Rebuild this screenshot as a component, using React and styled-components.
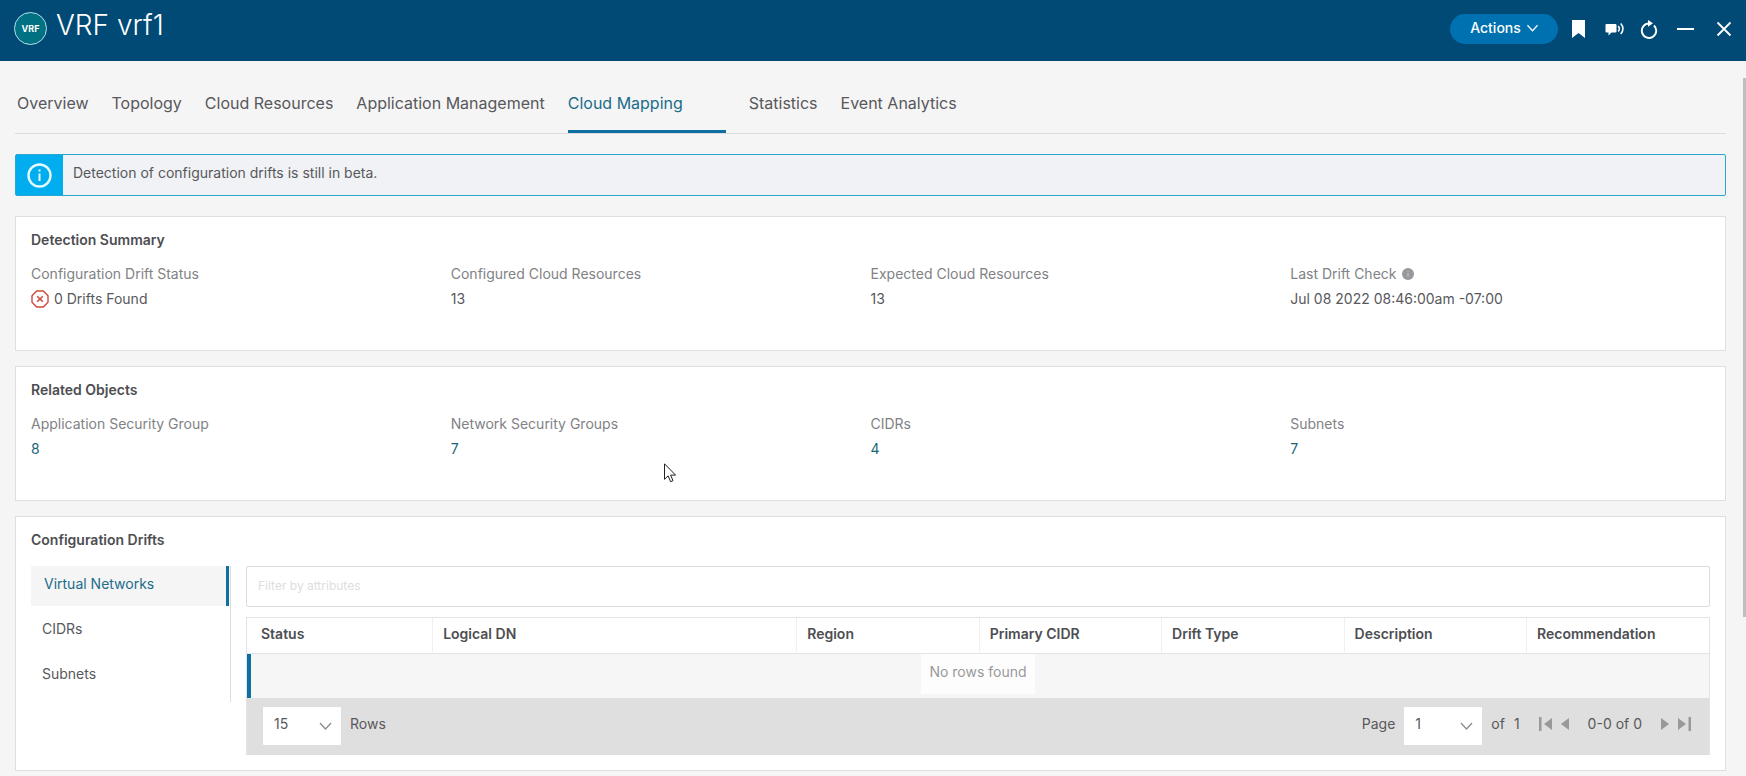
import React, { useState } from "react";
import styled, { createGlobalStyle } from "styled-components";

const GlobalStyle = createGlobalStyle`
  * {
    box-sizing: border-box;
  }

  body {
    margin: 0;
    background: #f5f5f6;
    color: #58585b;
    font-family: Inter, "Liberation Sans", sans-serif;
    font-size: 14px;
    line-height: 20px;
    overflow: hidden;
  }

  button, input, select {
    font: inherit;
    color: inherit;
  }
`;

const Page = styled.div`
  position: relative;
`;

const Header = styled.header`
  display: flex;
  align-items: flex-start;
  justify-content: space-between;
  height: 61px;
  padding: 0 14px;
  background: #004a75;
  color: #fff;
`;

const Heading = styled.div`
  display: flex;
  gap: 9px;
`;

const Badge = styled.span`
  display: flex;
  align-items: center;
  justify-content: center;
  width: 33px;
  height: 33px;
  margin-top: 12px;
  border: 1px solid #b5dfe8;
  border-radius: 50%;
  background: #007083;
  font-size: 9px;
  font-weight: 700;
`;

const PageTitle = styled.h1`
  margin: 8px 0 0;
  font-size: 28px;
  font-weight: 300;
  line-height: 34px;
`;

const Tools = styled.div`
  display: flex;
  align-items: center;
  gap: 14px;
  padding-top: 14px;
`;

const ActionsButton = styled.button`
  display: flex;
  align-items: center;
  justify-content: center;
  gap: 6px;
  width: 108px;
  height: 30px;
  padding: 0 0 2px;
  border: 0;
  border-radius: 15px;
  background: #0071b0;
  color: #fff;
  font-weight: 500;
`;

const IconButton = styled.button`
  display: flex;
  padding: 0;
  border: 0;
  background: none;
  margin-left: ${props => props.$gap || 0}px;
`;

const Content = styled.main`
  padding: 0 20px 4px 15px;
`;

const Tabs = styled.nav`
  display: flex;
  gap: 23px;
  height: 73px;
  padding: 0 2px;
  border-bottom: 1px solid #dcdcde;
`;

const Tab = styled.a`
  min-width: ${props => (props.$active ? "158px" : "auto")};
  padding-top: 32px;
  border-bottom: 3px solid ${props => (props.$active ? "#0f6fa3" : "transparent")};
  color: ${props => (props.$active ? "#1c6c89" : "#58585b")};
  font-size: 16px;
  text-decoration: none;
  white-space: nowrap;
`;

const Notice = styled.div`
  display: flex;
  height: 42px;
  margin: 20px 0;
  border: 1px solid #2ba7cf;
  border-radius: 2px;
  background: #f0f2f5;

  p {
    margin: 8px 10px;
  }
`;

const NoticeIcon = styled.div`
  display: flex;
  align-items: center;
  justify-content: center;
  width: 47px;
  background: #00adef;
`;

const Card = styled.section`
  margin-bottom: 15px;
  padding: 13px 15px ${props => props.$bottom || 41}px;
  border: 1px solid #dfdfe1;
  background: #fff;
`;

const CardTitle = styled.h2`
  margin: 0 0 ${props => props.$gap || 14}px;
  color: #4d4e51;
  font-size: 14px;
  font-weight: 600;
  line-height: 20px;
`;

const Facts = styled.dl`
  display: grid;
  grid-template-columns: repeat(4, 1fr);
  margin: 0;
`;

const Label = styled.dt`
  display: flex;
  align-items: center;
  gap: 5px;
  margin-bottom: 5px;
  color: #818285;
`;

const Value = styled.dd`
  display: flex;
  align-items: center;
  gap: 5px;
  height: 20px;
  margin: 0;
`;

const CountLink = styled.a`
  color: #1d6678;
  text-decoration: none;
`;

const Drifts = styled.div`
  display: grid;
  grid-template-columns: 200px 1fr;
  align-items: start;
  gap: 15px;
`;

const SideTabs = styled.nav`
  display: flex;
  flex-direction: column;
  gap: 5px;
  height: 136px;
  padding-right: 1px;
  border-right: 1px solid #dcdcde;
`;

const SideTab = styled.a`
  height: 40px;
  padding: 8px ${props => (props.$active ? 13 : 11)}px;
  border-right: 3px solid ${props => (props.$active ? "#0f6fa3" : "transparent")};
  background: ${props => (props.$active ? "#f5f5f6" : "none")};
  color: ${props => (props.$active ? "#1c6c89" : "#58585b")};
  text-decoration: none;
`;

const Filter = styled.input`
  display: block;
  width: 100%;
  height: 41px;
  margin-bottom: 10px;
  padding: 0 11px 2px;
  border: 1px solid #dcdcde;
  border-radius: 2px;
  background: #fff;
  font-size: 12px;

  &::placeholder {
    color: #dedede;
  }
`;

const Grid = styled.div`
  border: 1px solid #e3e3e5;
  border-bottom: 0;
`;

const Table = styled.table`
  width: 100%;
  border-collapse: collapse;
  table-layout: fixed;
`;

const HeadCell = styled.th`
  height: 35px;
  padding: 0 10px 2px;
  border-right: 1px solid #f0f0f1;
  color: #4d4e51;
  font-weight: 600;
  text-align: left;

  &:first-child {
    padding-left: 14px;
  }

  &:last-child {
    border-right: 0;
  }
`;

const EmptyCell = styled.td`
  height: 45px;
  padding: 0 0 4px;
  border-top: 1px solid #e3e3e5;
  background: #f6f6f6;
  box-shadow: inset 4px 0 #0f6fa3;
  color: #98999b;
  text-align: center;

  span {
    display: inline-block;
    padding: 8px 8px 12px;
    background: #fdfdfd;
  }
`;

const Footer = styled.div`
  display: flex;
  align-items: center;
  justify-content: space-between;
  height: 57px;
  padding: 0 18px 1px 16px;
  background: #dfdfdf;
`;

const FooterGroup = styled.div`
  display: flex;
  align-items: center;
  gap: ${props => props.$gap || 9}px;
`;

const FooterText = styled.span`
  padding-bottom: 4px;
`;

const PagerButton = styled(IconButton)`
  padding-bottom: 4px;
`;

const Picker = styled.div`
  position: relative;
  display: flex;

  svg {
    position: absolute;
    right: 9px;
    top: 15px;
    pointer-events: none;
  }
`;

const Select = styled.select`
  width: 78px;
  height: 38px;
  padding: 0 11px 4px;
  border: 0;
  border-radius: 1px;
  background: #fff;
  appearance: none;
`;

const ScrollThumb = styled.div`
  position: absolute;
  top: 78px;
  right: 0;
  width: 3px;
  height: 539px;
  background: #bfbfc0;
`;

const Pointer = styled.svg`
  position: absolute;
  top: 463px;
  left: 664px;
`;

const Chevron = ({ width = 13, color = "#8c8d8f" }) => (
  <svg width={width} height="8" viewBox="0 0 12 8" fill="none" stroke={color}>
    <path d="M.5 1L6 7l5.500-6" strokeWidth="1.300" />
  </svg>
);

const BookmarkIcon = () => (
  <svg width="13" height="18" viewBox="0 0 13 18" fill="#fff">
    <path d="M0 0h13v18l-6.500-5L0 18z" />
  </svg>
);

const SpeakIcon = () => (
  <svg width="20" height="16" viewBox="0 0 20 16" fill="none" stroke="#fff">
    <path
      d="M1.500 3h9a1 1 0 0 1 1 1v6.500a1 1 0 0 1-1 1H6.500L3.500 14.500v-3h-2a1 1 0 0 1-1-1V4a1 1 0 0 1 1-1z"
      fill="#fff"
      stroke="none"
    />
    <path d="M13.200 5c1.300 1.500 1.300 4 0 5.500" strokeWidth="1.500" />
    <path d="M15.700 2.500c3 3 3 7.500 0 10.500" strokeWidth="1.600" />
  </svg>
);

const RefreshIcon = () => (
  <svg width="18" height="19" viewBox="0 0 18 19" fill="none" stroke="#fff">
    <path d="M9 3.500A7.200 7.200 0 1 0 14 5.500" strokeWidth="1.900" />
    <path d="M8 0l5 3.300L8 6.800z" fill="#fff" stroke="none" />
  </svg>
);

const InfoIcon = () => (
  <svg width="25" height="25" viewBox="0 0 25 25" fill="none" stroke="#e4fbff">
    <circle cx="12.500" cy="12.500" r="11" strokeWidth="2.400" />
    <path d="M12.500 10.500V18M12.500 6.500v2" strokeWidth="2" />
  </svg>
);

const ErrorIcon = () => (
  <svg width="18" height="18" viewBox="0 0 18 18" fill="none" stroke="#cf4a3c">
    <path d="M5.700 1h6.600L17 5.700v6.600L12.300 17H5.700L1 12.300V5.700z" strokeWidth="1.400" />
    <path d="M6.200 6.200l5.600 5.600M11.800 6.200l-5.600 5.600" strokeWidth="1.600" />
  </svg>
);

const HintIcon = () => (
  <svg width="12" height="12" viewBox="0 0 12 12">
    <circle cx="6" cy="6" r="6" fill="#98999c" />
    <path d="M6 5.200v3.300M6 3.200v1" stroke="#cfcfd3" />
  </svg>
);

const PrevIcon = () => (
  <svg width="8" height="12" viewBox="0 0 8 12" fill="#98999b">
    <path d="M8 0v12L0 6z" />
  </svg>
);

const NextIcon = () => (
  <svg width="8" height="12" viewBox="0 0 8 12" fill="#98999b">
    <path d="M0 0v12l8-6z" />
  </svg>
);

const FirstIcon = () => (
  <svg width="13" height="14" viewBox="0 0 13 14" fill="#98999b">
    <path d="M0 0h2.500v14H0zM13 1v12L5 7z" />
  </svg>
);

const LastIcon = () => (
  <svg width="13" height="14" viewBox="0 0 13 14" fill="#98999b">
    <path d="M10.500 0H13v14h-2.500zM0 1v12l8-6z" />
  </svg>
);

const tabs = [
  "Overview",
  "Topology",
  "Cloud Resources",
  "Application Management",
  "Cloud Mapping",
  "Statistics",
  "Event Analytics"
];

const related = [
  { label: "Application Security Group", count: 8 },
  { label: "Network Security Groups", count: 7 },
  { label: "CIDRs", count: 4 },
  { label: "Subnets", count: 7 }
];

const sideTabs = ["Virtual Networks", "CIDRs", "Subnets"];

const columns = [
  { name: "Status", width: "12.7%" },
  { name: "Logical DN", width: "24.9%" },
  { name: "Region", width: "12.48%" },
  { name: "Primary CIDR", width: "12.48%" },
  { name: "Drift Type", width: "12.48%" },
  { name: "Description", width: "12.48%" },
  { name: "Recommendation", width: "12.48%" }
];

const App = () => {
  const [tab, setTab] = useState("Cloud Mapping");
  const [sideTab, setSideTab] = useState("Virtual Networks");

  return (
    <Page>
      <GlobalStyle />
      <Header>
        <Heading>
          <Badge>VRF</Badge>
          <PageTitle>VRF vrf1</PageTitle>
        </Heading>
        <Tools>
          <ActionsButton type="button">
            Actions
            <Chevron width={11} color="#fff" />
          </ActionsButton>
          <IconButton type="button" aria-label="Bookmark">
            <BookmarkIcon />
          </IconButton>
          <IconButton type="button" aria-label="Feedback" $gap={6}>
            <SpeakIcon />
          </IconButton>
          <IconButton type="button" aria-label="Refresh" $gap={1}>
            <RefreshIcon />
          </IconButton>
          <IconButton type="button" aria-label="Minimize" $gap={5}>
            <svg width="17" height="16" viewBox="0 0 17 16">
              <path d="M0 8h17" stroke="#fff" strokeWidth="2" />
            </svg>
          </IconButton>
          <IconButton type="button" aria-label="Close" $gap={8}>
            <svg width="16" height="16" viewBox="0 0 16 16">
              <path d="M1.500 1.500l13 13M14.500 1.500l-13 13" stroke="#fff" strokeWidth="1.800" />
            </svg>
          </IconButton>
        </Tools>
      </Header>

      <Content>
        <Tabs>
          {tabs.map(name => (
            <Tab key={name} href="#" $active={name === tab} onClick={() => setTab(name)}>
              {name}
            </Tab>
          ))}
        </Tabs>

        <Notice>
          <NoticeIcon>
            <InfoIcon />
          </NoticeIcon>
          <p>Detection of configuration drifts is still in beta.</p>
        </Notice>

        <Card>
          <CardTitle>Detection Summary</CardTitle>
          <Facts>
            <div>
              <Label>Configuration Drift Status</Label>
              <Value>
                <ErrorIcon />0 Drifts Found
              </Value>
            </div>
            <div>
              <Label>Configured Cloud Resources</Label>
              <Value>13</Value>
            </div>
            <div>
              <Label>Expected Cloud Resources</Label>
              <Value>13</Value>
            </div>
            <div>
              <Label>
                Last Drift Check <HintIcon />
              </Label>
              <Value>Jul 08 2022 08:46:00am -07:00</Value>
            </div>
          </Facts>
        </Card>

        <Card>
          <CardTitle>Related Objects</CardTitle>
          <Facts>
            {related.map(item => (
              <div key={item.label}>
                <Label>{item.label}</Label>
                <Value>
                  <CountLink href="#">{item.count}</CountLink>
                </Value>
              </div>
            ))}
          </Facts>
        </Card>

        <Card $bottom={15}>
          <CardTitle $gap={16}>Configuration Drifts</CardTitle>
          <Drifts>
            <SideTabs>
              {sideTabs.map(name => (
                <SideTab
                  key={name}
                  href="#"
                  $active={name === sideTab}
                  onClick={() => setSideTab(name)}
                >
                  {name}
                </SideTab>
              ))}
            </SideTabs>
            <div>
              <Filter
                type="text"
                aria-label="Filter by attributes"
                placeholder="Filter by attributes"
              />
              <Grid>
                <Table>
                  <colgroup>
                    {columns.map(column => (
                      <col key={column.name} width={column.width} />
                    ))}
                  </colgroup>
                  <thead>
                    <tr>
                      {columns.map(column => (
                        <HeadCell key={column.name}>{column.name}</HeadCell>
                      ))}
                    </tr>
                  </thead>
                  <tbody>
                    <tr>
                      <EmptyCell colSpan={columns.length}>
                        <span>No rows found</span>
                      </EmptyCell>
                    </tr>
                  </tbody>
                </Table>
                <Footer>
                  <FooterGroup>
                    <Picker>
                      <Select id="rows" defaultValue="15">
                        <option>15</option>
                        <option>25</option>
                        <option>50</option>
                      </Select>
                      <Chevron />
                    </Picker>
                    <FooterText as="label" htmlFor="rows">
                      Rows
                    </FooterText>
                  </FooterGroup>
                  <FooterGroup $gap={19}>
                    <FooterGroup>
                      <FooterText as="label" htmlFor="page">
                        Page
                      </FooterText>
                      <Picker>
                        <Select id="page" defaultValue="1">
                          <option>1</option>
                        </Select>
                        <Chevron />
                      </Picker>
                      <FooterText>of</FooterText>
                      <FooterText>1</FooterText>
                    </FooterGroup>
                    <FooterGroup>
                      <PagerButton type="button" aria-label="First page">
                        <FirstIcon />
                      </PagerButton>
                      <PagerButton type="button" aria-label="Previous page">
                        <PrevIcon />
                      </PagerButton>
                    </FooterGroup>
                    <FooterText>0-0 of 0</FooterText>
                    <FooterGroup>
                      <PagerButton type="button" aria-label="Next page">
                        <NextIcon />
                      </PagerButton>
                      <PagerButton type="button" aria-label="Last page">
                        <LastIcon />
                      </PagerButton>
                    </FooterGroup>
                  </FooterGroup>
                </Footer>
              </Grid>
            </div>
          </Drifts>
        </Card>
      </Content>

      <ScrollThumb />
      <Pointer width="13" height="20" viewBox="0 0 13 20">
        <path
          d="M.5.800v15.500l3.600-3.400 2.500 5.800 2.400-1-2.400-5.600h5z"
          fill="#fff"
          stroke="#222"
        />
      </Pointer>
    </Page>
  );
};

export default App;
